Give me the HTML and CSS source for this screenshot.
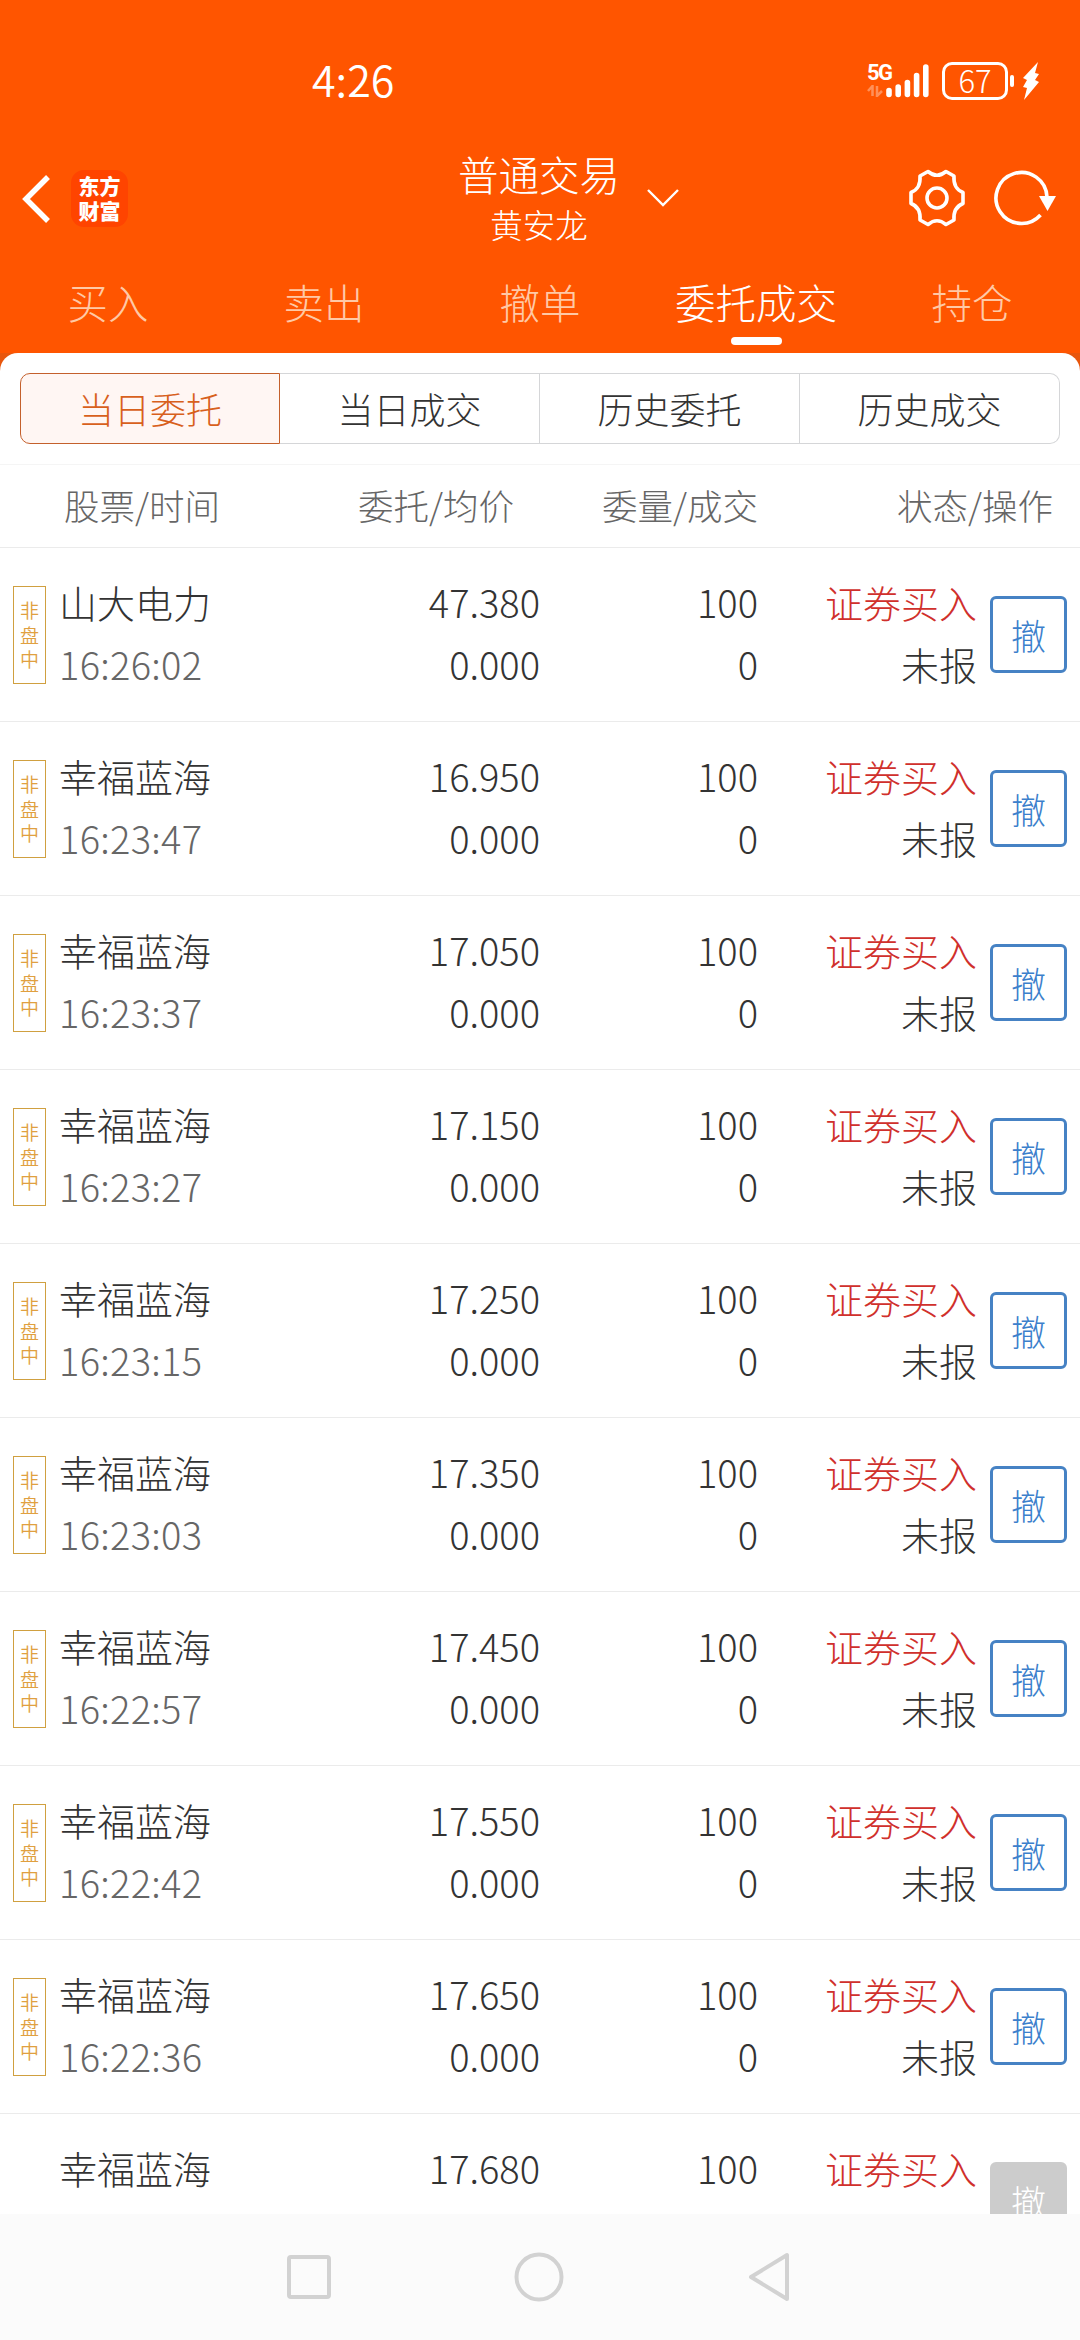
FILE: index.html
```html
<!DOCTYPE html>
<html lang="zh-CN">
  <head>
    <meta charset="utf-8" />
    <title>委托成交</title>
    <link rel="stylesheet" href="styles.css">
  </head>
  <body>
    <header>
      <div class="status-bar">
        <span class="clock">4:26</span>
        <div class="status-icons">
          <div class="network">
            <span>5G</span>
            <svg width="16" height="12" viewBox="0 0 16 12">
              <path d="M5.500 11V1L1 6M10 1v10l5-5" fill="none" stroke="#fff" stroke-width="2.500" />
            </svg>
          </div>
          <svg class="signal" width="44" height="36" viewBox="0 0 44 36">
            <path d="M4 27.500v4M13.200 24v7.500M22.400 19.500v12M31.600 12.500v19M40.800 4v27.500" stroke="#fff" stroke-width="5.600" stroke-linecap="round" />
          </svg>
          <div class="battery">67</div>
          <div class="battery-tip"></div>
          <svg class="bolt" width="18" height="38" viewBox="0 0 18 38">
            <path d="M16 0L1 16l4 2-4 7 4 1L2 38 17 20l-4-2 4-6-4-1z" fill="#fff" />
          </svg>
        </div>
      </div>

      <div class="title-bar">
        <div class="title-left">
          <svg width="30" height="50" viewBox="0 0 30 50">
            <path d="M26 3L4 25l22 22" fill="none" stroke="#fff" stroke-width="5.500" />
          </svg>
          <div class="logo"><span>东方</span><span>财富</span></div>
        </div>
        <div class="title-text">
          <div class="title">普通交易</div>
          <div class="user">黄安龙</div>
        </div>
        <div class="title-right">
          <svg class="chevron" width="32" height="18" viewBox="0 0 32 18">
            <path d="M1 1l15 15L31 1" fill="none" stroke="#fff" stroke-width="2.400" />
          </svg>
          <svg width="58" height="58" viewBox="0 0 58 58">
            <path d="M20 2.500Q29 10 38 2.500L46 7Q45 19.500 55 23.500V34.500Q45 38.500 46 51L38 55.500Q29 48 20 55.500L12 51Q13 38.500 3 34.500V23.500Q13 19.500 12 7Z" fill="none" stroke="#fff" stroke-width="3.600" stroke-linejoin="round" />
            <circle cx="29" cy="29" r="10" fill="none" stroke="#fff" stroke-width="3.600" />
          </svg>
          <svg class="refresh" width="62" height="58" viewBox="0 0 62 58">
            <path d="M46.500 46A25.500 25.500 0 1 1 53 28" fill="none" stroke="#fff" stroke-width="3.600" />
            <path d="M45 27h17l-8.500 15z" fill="#fff" />
          </svg>
        </div>
      </div>

      <nav class="main-tabs">
        <a>买入</a>
        <a>卖出</a>
        <a>撤单</a>
        <a class="active">委托成交</a>
        <a>持仓</a>
      </nav>
    </header>

    <main>
      <div class="panel">
        <div class="sub-tabs">
          <a class="active">当日委托</a>
          <a>当日成交</a>
          <a>历史委托</a>
          <a>历史成交</a>
        </div>
        <div class="list-head">
          <span>股票/时间</span>
          <span>委托/均价</span>
          <span>委量/成交</span>
          <span>状态/操作</span>
        </div>
        <div id="orders"></div>
      </div>
    </main>

    <footer>
      <svg width="44" height="44" viewBox="0 0 44 44">
        <rect x="2" y="2" width="40" height="40" rx="2" />
      </svg>
      <svg width="50" height="50" viewBox="0 0 50 50">
        <circle cx="25" cy="25" r="22.500" />
      </svg>
      <svg width="44" height="50" viewBox="0 0 44 50">
        <path d="M40 3v44L4 25z" />
      </svg>
    </footer>

    <script>
      const orders = [
        ["山大电力", "16:26:02", "47.380"],
        ["幸福蓝海", "16:23:47", "16.950"],
        ["幸福蓝海", "16:23:37", "17.050"],
        ["幸福蓝海", "16:23:27", "17.150"],
        ["幸福蓝海", "16:23:15", "17.250"],
        ["幸福蓝海", "16:23:03", "17.350"],
        ["幸福蓝海", "16:22:57", "17.450"],
        ["幸福蓝海", "16:22:42", "17.550"],
        ["幸福蓝海", "16:22:36", "17.650"],
        // already closed, can't be cancelled
        ["幸福蓝海", "", "17.680", true],
      ];

      document.getElementById("orders").innerHTML = orders
        .map(([name, time, price, closed]) => `
          <div class="order">
            ${closed ? "<div></div>" : '<div class="tag"><i>非</i><i>盘</i><i>中</i></div>'}
            <div class="stock"><p>${name}</p><p class="time">${time}</p></div>
            <div class="num"><p>${price}</p><p>${closed ? "" : "0.000"}</p></div>
            <div class="num"><p>100</p><p>${closed ? "" : "0"}</p></div>
            <div class="state"><p class="buy">证券买入</p><p>${closed ? "" : "未报"}</p></div>
            <button class="cancel"${closed ? " disabled" : ""}>撤</button>
          </div>`)
        .join("");
    </script>
  </body>
</html>
```
FILE: styles.css
```css
* {
  box-sizing: border-box;
}

body {
  margin: 0;
  width: 1080px;
  height: 2340px;
  display: flex;
  flex-direction: column;
  overflow: hidden;
  background: #fff;
  color: #333;
  font-family: "Noto Sans CJK SC", sans-serif;
  font-weight: 300;
}

p {
  margin: 0;
}

svg {
  display: block;
  flex: none;
}

header {
  height: 353px;
  background: #ff5500;
  color: #fff;
}

/* Status bar */
.status-bar {
  height: 148px;
  padding: 50px 40px 0 312px;
  display: flex;
  justify-content: space-between;
}

.clock {
  height: 62px;
  line-height: 57px;
  font-size: 43px;
  font-weight: 350;
}

.status-icons {
  height: 62px;
  display: flex;
  align-items: center;
}

.network {
  width: 18px;
  height: 36px;
}

.network span {
  display: block;
  height: 22px;
  font: bold 22px/20px Roboto, sans-serif;
  letter-spacing: -1.5px;
}

.network svg {
  opacity: 0.35;
}

.battery {
  width: 66px;
  height: 38px;
  margin-left: 13px;
  border: 3px solid #fff;
  border-radius: 10px;
  font-size: 31px;
  line-height: 30px;
  text-align: center;
}

.battery-tip {
  width: 4px;
  height: 12px;
  margin-left: 2px;
  border-radius: 2px;
  background: #fff;
}

.bolt {
  margin-left: 8px;
}

/* Title */
.title-bar {
  height: 105px;
  padding: 0 24px 0 22px;
  display: grid;
  grid-template-columns: 1fr 162px 1fr;
}

.title-left {
  display: flex;
  align-items: center;
  padding-bottom: 4px;
}

.logo {
  width: 57px;
  height: 57px;
  margin-left: 19px;
  padding-top: 3px;
  border-radius: 13px;
  background: #ff4400;
  font-size: 21px;
  font-weight: 900;
  line-height: 25px;
  text-align: center;
}

.logo span {
  display: block;
}

.title-text {
  text-align: center;
}

.title {
  height: 52px;
  font-size: 40.5px;
  line-height: 52px;
  white-space: nowrap;
}

.user {
  font-size: 32.5px;
  line-height: 48px;
}

.title-right {
  display: flex;
  align-items: center;
  padding-bottom: 6px;
}

.chevron {
  margin: 0 auto 0 27px;
}

.refresh {
  margin-left: 28px;
}

.main-tabs {
  height: 100px;
  display: grid;
  grid-template-columns: repeat(5, 1fr);
}

.main-tabs a {
  display: flex;
  flex-direction: column;
  align-items: center;
  font-size: 40.5px;
  line-height: 98px;
  color: #ffc9a6;
}

.main-tabs .active {
  color: #fff;
}

.main-tabs .active::after {
  content: "";
  width: 51px;
  height: 8px;
  margin-top: -14px;
  border-radius: 4px;
  background: #fff;
}

/* List */
main {
  height: 1861px;
  overflow: hidden;
  background: linear-gradient(#e8560c 20px, #fff 20px);
}

.panel {
  padding-top: 20px;
  border-radius: 18px 18px 0 0;
  background: #fff;
}

.sub-tabs {
  height: 71px;
  margin: 0 20px 20px;
  display: grid;
  grid-template-columns: repeat(4, 1fr);
}

.sub-tabs a {
  border: 1px solid #d5d6d8;
  border-left: none;
  font-size: 36px;
  line-height: 68px;
  text-align: center;
}

.sub-tabs a:last-child {
  border-radius: 0 10px 10px 0;
}

.sub-tabs .active {
  border: 1px solid #c4602c;
  border-radius: 10px 0 0 10px;
  background: #fff6f3;
  color: #d8601c;
}

.list-head {
  height: 84px;
  border-top: 1px solid #f5f5f5;
  border-bottom: 1px solid #ebebeb;
  display: grid;
  grid-template-columns: 220px 294px 244px 295px;
  font-size: 35.5px;
  line-height: 79px;
  text-align: right;
  color: #666;
}

.order {
  height: 174px;
  padding: 23px 0 0 13px;
  border-bottom: 1px solid #ebebeb;
  display: grid;
  grid-template-columns: 33px 194px 300px 218px 219px 90px;
  font-size: 38px;
  line-height: 62px;
}

.tag {
  height: 98px;
  margin-top: 15px;
  padding-top: 11px;
  border: 1px solid #d0a040;
  color: #e0a040;
}

.tag i {
  display: block;
  height: 24.5px;
  font-size: 19px;
  font-style: normal;
  font-weight: 350;
  line-height: 24.5px;
  text-align: center;
}

.stock {
  padding-left: 13px;
}

.time {
  color: #666;
  letter-spacing: 0.3px;
}

.num,
.state {
  text-align: right;
}

.buy {
  color: #d0302c;
}

.cancel {
  width: 77px;
  height: 77px;
  margin: 25px 0 0 13px;
  padding: 0;
  border: 3px solid #4682c4;
  border-radius: 6px;
  background: #fff;
  color: #3c80cc;
  font: inherit;
  font-size: 35px;
  line-height: 69px;
}

.cancel:disabled {
  border-color: #ccc;
  background: #ccc;
  color: #fff;
}

/* System navigation */
footer {
  height: 126px;
  padding: 0 289px 0 287px;
  display: flex;
  align-items: center;
  justify-content: space-between;
  background: #fbfbfb;
}

footer svg {
  fill: none;
  stroke: #d2d2d2;
  stroke-width: 4;
  stroke-linejoin: round;
}
```
